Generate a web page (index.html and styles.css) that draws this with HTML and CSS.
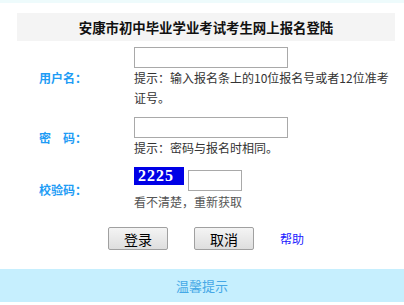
FILE: index.html
```html
<!DOCTYPE html>
<html lang="zh-CN">
<head>
<meta charset="utf-8">
<title>安康市初中毕业学业考试考生网上报名登陆</title>
<link rel="stylesheet" href="styles.css">
</head>
<body>
<div class="topstrip"></div>
<div class="wrap">
  <div class="title">安康市初中毕业学业考试考生网上报名登陆</div>
  <div class="form">
    <div class="label">用户名：</div>
    <div class="field">
      <input class="txt" type="text">
      <div class="hint">提示：输入报名条上的10位报名号或者12位准考证号。</div>
    </div>
    <div class="label">密　码：</div>
    <div class="field">
      <input class="txt" type="password">
      <div class="hint">提示：密码与报名时相同。</div>
    </div>
    <div class="label">校验码：</div>
    <div class="field">
      <div class="coderow">
        <span class="captcha">2225</span>
        <input class="code" type="text">
      </div>
      <div class="hint grey">看不清楚，重新获取</div>
    </div>
  </div>
  <div class="actions">
    <button class="btn">登录</button>
    <button class="btn">取消</button>
    <a class="help" href="#">帮助</a>
  </div>
</div>
<div class="tips">温馨提示</div>
</body>
</html>
```
FILE: styles.css
```css
* { box-sizing: border-box; }
body {
  margin: 0;
  font-family: "Noto Sans CJK SC", "Noto Sans", sans-serif;
  font-size: 12px;
  color: #333;
  background: #fff;
}
.topstrip { height: 3px; background: #eefbfc; }
.wrap { width: 378px; margin: 10px 0 0 17px; }
.title {
  height: 28px;
  line-height: 28px;
  background: #f4f4f4;
  text-align: center;
  font-size: 13.4px;
  font-weight: bold;
  color: #111;
}
.form {
  display: grid;
  grid-template-columns: 117px 261px;
  row-gap: 9px;
  margin-top: 6px;
}
.label {
  align-self: center;
  padding-left: 22px;
  font-weight: bold;
  color: #1e9cf5;
  font-size: 12px;
}
.field { display: flex; flex-direction: column; align-items: flex-start; }
.txt {
  width: 154px;
  height: 21px;
  margin: 0;
  border: 1px solid #a9a9a9;
  padding: 0 2px;
}
.hint { line-height: 20px; color: #333; }
.hint.grey { color: #555; }
.coderow { display: flex; align-items: flex-start; gap: 4px; height: 25px; }
.captcha {
  width: 50px;
  height: 18px;
  background: #0000e6;
  color: #fff;
  font-family: "Liberation Serif", serif;
  font-weight: bold;
  font-size: 16px;
  line-height: 18px;
  letter-spacing: 1px;
  padding-left: 4px;
}
.code {
  width: 54px;
  height: 21px;
  margin: 3px 0 0 0;
  border: 1px solid #a9a9a9;
}
.actions {
  display: flex;
  justify-content: center;
  align-items: center;
  gap: 26px;
  margin-top: 15px;
}
.btn {
  width: 60px;
  height: 23px;
  margin: 0;
  padding: 0;
  border: 1px solid #a0a0a0;
  border-radius: 2px;
  background: linear-gradient(#f4f4f4, #dedede);
  font-family: "Noto Sans CJK SC", sans-serif;
  font-size: 14px;
  color: #000;
}
.help { color: #1a1aff; text-decoration: none; font-size: 12px; }
.tips {
  margin-top: 19px;
  height: 33px;
  line-height: 33px;
  background: #c6effe;
  text-align: center;
  color: #45a8e6;
  font-size: 13px;
}
```
